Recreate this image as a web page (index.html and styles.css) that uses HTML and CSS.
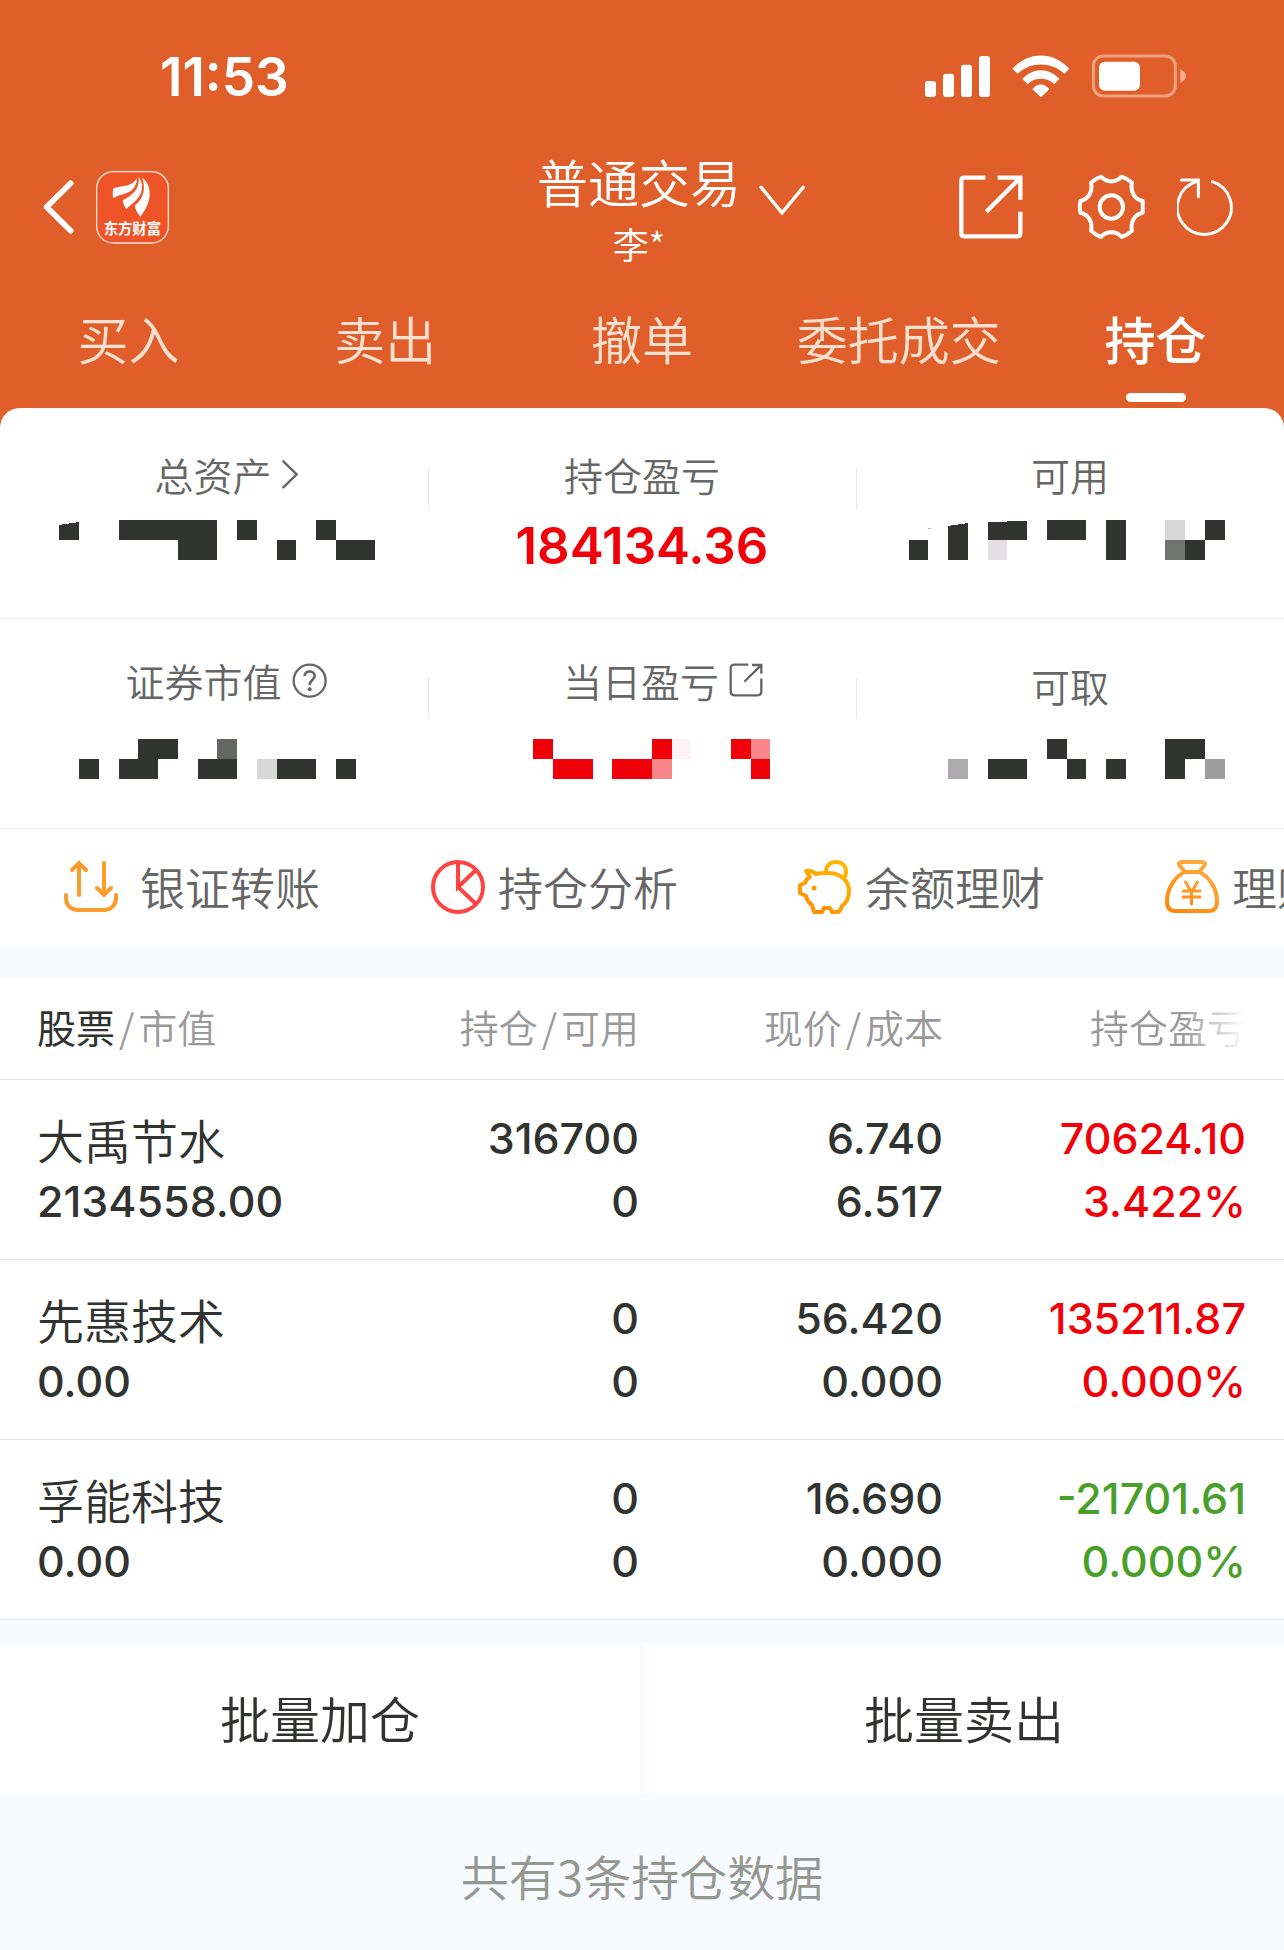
FILE: index.html
```html
<!DOCTYPE html>
<html lang="zh-CN">
<head>
<meta charset="utf-8">
<meta name="viewport" content="width=device-width, initial-scale=1">
<title>普通交易 - 持仓</title>
<link rel="stylesheet" href="styles.css">
</head>
<body>
<header class="top">
  <div class="status">
    <span class="time">11:53</span>
    <div class="status-icons">
      <svg width="65" height="41" viewBox="135 75 195 123" fill="#fff" aria-hidden="true"><rect x="135" y="150" width="33" height="48" rx="9"/><rect x="189" y="128" width="33" height="70" rx="9"/><rect x="243" y="101" width="33" height="97" rx="9"/><rect x="297" y="75" width="33" height="123" rx="9"/></svg>
      <svg width="58" height="43" viewBox="398 71 174 129" fill="#fff" aria-hidden="true"><path d="M399 112C448 59 521 59 570 112L555 127C515 90 454 90 415 127ZM429 143C460 108 510 108 540 143L525 158C502 137 467 137 445 158ZM459 174C472 155 497 155 510 174L485 198Z"/></svg>
      <svg width="94" height="44" viewBox="639 70 282 132" aria-hidden="true"><rect x="643" y="76" width="246" height="120" rx="30" fill="none" stroke="#fff" stroke-opacity=".42" stroke-width="9"/><rect x="660" y="93" width="123" height="87" rx="18" fill="#fff"/><path d="M904 116c10 4 17 12 17 20s-7 16-17 21z" fill="#fff" fill-opacity=".5"/></svg>
    </div>
  </div>
  <div class="nav">
    <div class="nav-left">
      <button class="icon-btn" aria-label="返回"><svg width="31" height="54" viewBox="130 448 94 162" fill="none" stroke="#fff" stroke-width="17" stroke-linecap="round" stroke-linejoin="round"><path d="M214 457L141 529L214 601"/></svg></button>
      <svg class="logo" width="73" height="73" viewBox="288 419 219 219" role="img" aria-label="东方财富"><rect x="290" y="421" width="215" height="214" rx="50" fill="#ef5428" stroke="#fde3d6" stroke-width="4"/><g fill="#fff"><path d="M341 470C370 462 398 466 411 440C410 470 392 484 365 490C355 492 347 496 340 501C337 490 338 480 341 470Z"/><path d="M416 438C420 470 400 492 368 507C370 518 374 527 379 533C395 517 421 502 425 475C428 460 424 448 416 438Z"/><path d="M427 439C455 460 460 508 421 556C412 545 405 535 405 522C425 505 440 480 427 439Z"/><text class="logo-text" x="397" y="607" text-anchor="middle">东方财富</text></g></svg>
    </div>
    <button class="account">
      <span class="account-text"><span class="account-title">普通交易</span><span class="account-name">李*</span></span>
      <svg width="46" height="31" viewBox="781 166 138 92" fill="none" stroke="#fff" stroke-width="10" stroke-linecap="round" aria-hidden="true"><path d="M787 172L850 249L914 172"/></svg>
    </button>
    <div class="nav-right">
      <button class="icon-btn share" aria-label="分享"><svg width="64" height="64" viewBox="239 439 192 192" fill="none" stroke="#fff" stroke-width="13"><path d="M318 447H255q-9 0-9 9V614q0 9 9 9H414q9 0 9-9V549M355 447H423V513M321 549L420 450"/></svg></button>
      <button class="icon-btn" aria-label="设置"><svg width="68" height="66" viewBox="592 432 204 198" fill="none" stroke="#fff" stroke-width="12" stroke-linejoin="round"><path d="M664 440C681 459 709 459 726 440Q743 446 757 458C751 485 764 508 789 513Q790 531 789 548C764 553 751 577 757 602Q743 615 726 621C709 602 681 602 664 621Q647 615 634 602C640 577 627 553 602 548Q599 531 602 513C627 508 640 485 634 458Q647 446 664 440Z"/><circle cx="695" cy="531" r="35"/></svg></button>
      <button class="icon-btn" aria-label="刷新"><svg width="58" height="58" viewBox="892 444 174 174" fill="none" stroke="#fff" stroke-width="9" stroke-linecap="round"><path d="M998 455A81 81 0 1 1 950 455M905 450H956V500"/></svg></button>
    </div>
  </div>
  <nav class="tabs">
    <a href="#buy">买入</a>
    <a href="#sell">卖出</a>
    <a href="#cancel">撤单</a>
    <a href="#orders">委托成交</a>
    <a href="#positions" class="active" aria-current="page">持仓</a>
  </nav>
</header>

<main>
  <section class="summary">
    <div class="stat-row">
      <div class="stat">
        <a class="label with-icon" href="#assets">总资产<svg width="16" height="29" viewBox="841 99 48 87" fill="none" stroke="#666" stroke-width="7" stroke-linecap="round" aria-hidden="true"><path d="M845 103L885 142L845 181"/></svg></a>
        <svg class="mosaic" viewBox="0 0 428 40" fill="#313330" aria-hidden="true"><path d="M59 5L79 2V20H59ZM119 0H217V40H178V20H119ZM237 0h20v20h-20zM277 20h19v20h-19zM316 0h20v20h-20zM336 20h39v20h-39z"/></svg>
      </div>
      <div class="stat">
        <span class="label">持仓盈亏</span>
        <strong class="amount">184134.36</strong>
      </div>
      <div class="stat">
        <span class="label">可用</span>
        <svg class="mosaic" viewBox="0 0 428 40" fill="#313330" aria-hidden="true"><path d="M53 20h19v20H53zM92 6L112 3V40H92ZM132 2L171 1V20H132ZM191 0h39v20h-39zM250 0h20v40h-20zM329 20h20v20h-20zM349 0h20v20h-20z"/><path fill="#bbb" d="M72 8h3v1h-3z"/><path fill="#e5e0e4" d="M132 20h19v20h-19z"/><path fill="#d7d7d7" d="M309 0h20v20h-20z"/><path fill="#727472" d="M309 20h20v20h-20z"/></svg>
      </div>
    </div>
    <div class="stat-row lower">
      <div class="stat">
        <span class="label with-icon">证券市值<svg width="35" height="35" viewBox="882 701 105 105" fill="none" stroke="#666" stroke-width="7" aria-hidden="true"><circle cx="935" cy="754" r="48"/><path stroke-width="8" d="M920 740c0-9 7-14 15-14s15 6 15 14c0 11-15 12-15 27"/><circle cx="935" cy="780" r="6" fill="#666" stroke="none"/></svg></span>
        <svg class="mosaic" viewBox="0 0 428 40" fill="#313330" aria-hidden="true"><path d="M79 20h20v20H79zM119 20H138V0H178V20H158V40H119ZM198 20h39v20h-39zM277 20h39v20h-39zM336 20h20v20h-20z"/><path fill="#646663" d="M217 0h20v20h-20z"/><path fill="#d7d7d7" d="M257 20h20v20h-20z"/></svg>
      </div>
      <div class="stat">
        <a class="label with-icon daily" href="#daily">当日盈亏<svg width="34" height="34" viewBox="900 702 102 102" fill="none" stroke="#666" stroke-width="7" stroke-linecap="round" aria-hidden="true"><path d="M955 707H917q-12 0-12 12v68q0 12 12 12h68q12 0 12-12V751M972 708H997V731M948 756L995 710"/></svg></a>
        <svg class="mosaic" viewBox="0 0 428 40" fill="#f00008" aria-hidden="true"><path d="M105 0h20v20h-20zM125 20h40v20h-40zM184 20h40v20h-40zM224 0h20v20h-20zM303 0h20v20h-20zM323 20h19v20h-19z"/><path fill="#f8868b" d="M224 20h20v20h-20zM323 0h19v20h-19z"/><path fill="#fff2f6" d="M244 0h19v20h-19z"/></svg>
      </div>
      <div class="stat">
        <span class="label">可取</span>
        <svg class="mosaic" viewBox="0 0 428 40" fill="#313330" aria-hidden="true"><path d="M132 20h39v20h-39zM191 0h20v20h-20zM211 20h19v20h-19zM250 20h20v20h-20zM309 0h40v20h-20v20h-20z"/><path fill="#acaaac" d="M92 20h20v20H92z"/><path fill="#9c9c9c" d="M349 20h20v20h-20z"/></svg>
      </div>
    </div>
    <nav class="actions">
      <a href="#transfer" class="transfer"><svg width="54" height="54" viewBox="0 0 54 54" fill="none" stroke="#f99b2d" stroke-width="4" stroke-linecap="round" aria-hidden="true"><path d="M15 35V3M8 10L15 3L22 10M40 3V35M33 28L40 35L47 28M2 35v3c0 7 5 12 12 12h26c7 0 12-5 12-12v-3"/></svg>银证转账</a>
      <a href="#analysis"><svg width="54" height="54" viewBox="0 0 54 54" fill="none" stroke="#ff4343" stroke-width="4" aria-hidden="true"><circle cx="27" cy="27" r="25"/><path d="M27 2V27L45 10M27 27L45 44"/></svg>持仓分析</a>
      <a href="#balance"><svg width="54" height="54" viewBox="0 0 54 54" fill="none" stroke="url(#gold)" stroke-width="4" stroke-linejoin="round" aria-hidden="true"><defs><linearGradient id="gold" gradientUnits="userSpaceOnUse" x1="45" y1="0" x2="12" y2="54"><stop stop-color="#ffb900"/><stop offset="1" stop-color="#ff8f00"/></linearGradient></defs><path d="M28 12C28 6 32 2 38 2s10 4 10 10c0 3-1 5-3 7M8 11c4-1 7 0 10 3 4-1 8-1 12-1 13 0 21 8 21 18 0 6-3 12-7 15-1 3-2 6-4 6h-6l-2-4h-6l-2 4h-8l-2-7c-3-2-5-4-6-9l-6-3v-8l5-2c1-3 3-5 5-6z"/><circle cx="16" cy="28" r="2.500" fill="#ff9a00" stroke="none"/></svg>余额理财</a>
      <a href="#wealth"><svg width="54" height="54" viewBox="0 0 54 54" fill="none" stroke="url(#amber)" stroke-width="4" stroke-linejoin="round" stroke-linecap="round" aria-hidden="true"><defs><linearGradient id="amber" gradientUnits="userSpaceOnUse" x1="40" y1="0" x2="10" y2="54"><stop stop-color="#ffae42"/><stop offset="1" stop-color="#ff850a"/></linearGradient></defs><path d="M17 2h20c3 0 4 2 2 4l-5 6H20l-5-6c-2-2-1-4 2-4zM20 12C10 16 2 29 2 41c0 7 3 10 8 10h34c5 0 8-3 8-10 0-12-8-25-18-29"/><path stroke-width="3" d="M20.500 22l6 10 6-10M26.500 31v13M18 31h17M18 37h17"/></svg>理财</a>
    </nav>
  </section>

  <table class="holdings">
    <thead>
      <tr>
        <th scope="col"><b>股票</b><i>/</i>市值</th>
        <th scope="col">持仓<i>/</i>可用</th>
        <th scope="col">现价<i>/</i>成本</th>
        <th scope="col"><span class="fade">持仓盈亏</span></th>
      </tr>
    </thead>
    <tbody>
      <tr>
        <td><span class="name">大禹节水</span><span>2134558.00</span></td>
        <td><span>316700</span><span>0</span></td>
        <td><span>6.740</span><span>6.517</span></td>
        <td class="up"><span>70624.10</span><span>3.422%</span></td>
      </tr>
      <tr>
        <td><span class="name">先惠技术</span><span>0.00</span></td>
        <td><span>0</span><span>0</span></td>
        <td><span>56.420</span><span>0.000</span></td>
        <td class="up"><span>135211.87</span><span>0.000%</span></td>
      </tr>
      <tr>
        <td><span class="name">孚能科技</span><span>0.00</span></td>
        <td><span>0</span><span>0</span></td>
        <td><span>16.690</span><span>0.000</span></td>
        <td class="down"><span>-21701.61</span><span>0.000%</span></td>
      </tr>
    </tbody>
  </table>

  <div class="batch">
    <button>批量加仓</button>
    <button>批量卖出</button>
  </div>
  <p class="total">共有3条持仓数据</p>
</main>
</body>
</html>
```
FILE: styles.css
```css
* {
  box-sizing: border-box;
}

body {
  margin: 0;
  min-height: 100vh;
  background: #f7faff;
  color: #313330;
  font-family: "Noto Sans CJK SC", sans-serif;
  font-weight: 350;
  overflow-x: hidden;
}

svg {
  display: block;
  flex: none;
}

a {
  color: inherit;
  text-decoration: none;
}

button {
  margin: 0;
  padding: 0;
  border: 0;
  background: none;
  color: inherit;
  font: inherit;
}

/* Header */
.top {
  padding-bottom: 20px;
  background: #df5e29;
  color: #fff;
}

.status {
  display: flex;
  align-items: center;
  justify-content: space-between;
  height: 130px;
  padding: 22px 98px 0 160px;
}

.time {
  padding-top: 2px;
  font: 600 53px/60px Inter, sans-serif;
}

.status-icons {
  display: flex;
  align-items: center;
  gap: 22px;
}

.nav {
  display: grid;
  grid-template-columns: 1fr auto 1fr;
  align-items: center;
  height: 152px;
  padding: 2px 49px 0 43px;
}

.nav-left,
.nav-right {
  display: flex;
  align-items: center;
  gap: 22px;
}

.nav-right {
  justify-content: flex-end;
  gap: 32px;
}

.share {
  margin-right: 22px;
}

.logo-text {
  font: 700 43px "Noto Sans CJK SC", sans-serif;
}

.account {
  display: grid;
  grid-template-columns: 46px auto 46px;
  gap: 18px;
}

.account-text {
  grid-column: 2;
  display: grid;
  gap: 12px;
}

.account svg {
  margin-top: 34px;
}

.account-title {
  font-size: 51px;
  line-height: 60px;
}

.account-name {
  font-size: 36px;
  line-height: 40px;
}

.tabs {
  display: grid;
  grid-template-columns: repeat(5, 1fr);
  height: 126px;
}

.tabs a {
  position: relative;
  padding-top: 26px;
  color: #fae0d0;
  font-size: 51px;
  line-height: 60px;
  text-align: center;
}

.tabs .active {
  color: #fff;
  font-weight: 500;
}

.tabs .active::after {
  content: "";
  position: absolute;
  bottom: 6px;
  left: 50%;
  width: 60px;
  height: 9px;
  margin-left: -30px;
  border-radius: 5px;
  background: #fff;
}

/* Account summary */
.summary {
  position: relative;
  margin-top: -20px;
  border-radius: 20px 20px 0 0;
  background: #fff;
}

.stat-row {
  display: grid;
  grid-template-columns: repeat(3, 1fr);
  height: 211px;
  padding-top: 42px;
  border-bottom: 1px solid #ebebeb;
}

.stat {
  position: relative;
  display: flex;
  flex-direction: column;
  align-items: center;
}

.stat + .stat::before {
  content: "";
  position: absolute;
  top: 18px;
  left: 0;
  width: 1px;
  height: 42px;
  background: #ebebeb;
}

.label {
  display: flex;
  align-items: center;
  gap: 10px;
  height: 48px;
  color: #666;
  font-size: 39px;
  line-height: 48px;
}

.with-icon {
  padding-left: 24px;
}

.daily {
  padding-left: 42px;
}

.amount {
  margin-top: 18px;
  color: #f00008;
  font: 600 51px/60px Inter, sans-serif;
}

.mosaic {
  width: 428px;
  height: 40px;
  margin-top: 22px;
  shape-rendering: crispEdges;
}

.lower {
  height: 210px;
  padding-top: 40px;
}

.lower .label {
  margin-top: 2px;
}

.lower .with-icon {
  margin: -3px 0 5px;
}

.lower .mosaic {
  margin-top: 30px;
}

.actions {
  display: grid;
  grid-auto-columns: 367px;
  grid-auto-flow: column;
  align-items: center;
  height: 119px;
  padding: 0 0 3px 64px;
  overflow: hidden;
}

.actions a {
  display: flex;
  align-items: center;
  gap: 13px;
  color: #666;
  font-size: 45px;
  line-height: 54px;
  white-space: nowrap;
}

.actions .transfer {
  gap: 22px;
}

/* Holdings */
.holdings {
  width: 100%;
  margin-top: 30px;
  border-collapse: separate;
  border-spacing: 0;
  table-layout: fixed;
  background: #fff;
}

.holdings th,
.holdings td {
  padding: 0;
  border-bottom: 1px solid #e6e6e6;
  text-align: right;
  vertical-align: top;
}

.holdings th {
  width: 304px;
  height: 102px;
  padding-top: 24px;
  color: #999;
  font-size: 39px;
  font-weight: 350;
  line-height: 48px;
}

.holdings th:first-child,
.holdings td:first-child {
  width: auto;
  padding-left: 37px;
  text-align: left;
}

.holdings th:last-child,
.holdings td:last-child {
  width: 341px;
  padding-right: 38px;
}

.holdings b {
  color: #313330;
  font-weight: 400;
}

.holdings i {
  padding: 0 4px;
  font-style: normal;
}

.fade {
  -webkit-mask-image: linear-gradient(to right, #000 60%, transparent);
  mask-image: linear-gradient(to right, #000 60%, transparent);
}

.holdings td {
  height: 180px;
  padding-top: 27px;
  font: 500 43px/63px Inter, sans-serif;
}

.holdings td span {
  display: block;
}

.holdings td .name {
  font: 350 47px/63px "Noto Sans CJK SC", sans-serif;
}

.holdings .up {
  color: #f00008;
}

.holdings .down {
  color: #4a9f2a;
}

/* Batch actions and total */
.batch {
  display: grid;
  grid-template-columns: 1fr 1fr;
  gap: 4px;
  margin-top: 23px;
}

.batch button {
  height: 151px;
  padding-bottom: 3px;
  background: #fff;
  font-size: 50px;
  line-height: 60px;
}

.total {
  margin: 0;
  padding: 51px 0 42px;
  color: #969791;
  font-size: 48px;
  line-height: 60px;
  text-align: center;
}
```
